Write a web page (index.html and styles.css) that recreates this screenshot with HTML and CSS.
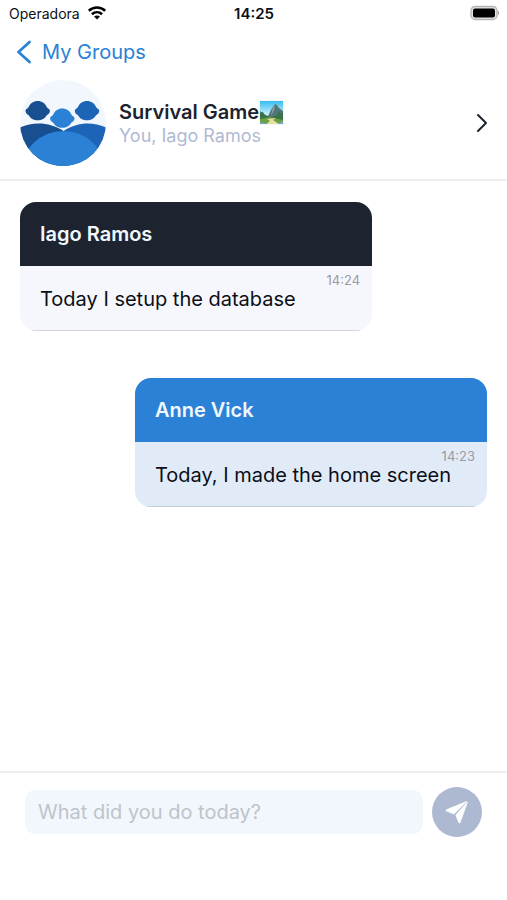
FILE: index.html
```html
<!DOCTYPE html>
<html lang="en">
<head>
<meta charset="utf-8">
<meta name="viewport" content="width=device-width, initial-scale=1">
<title>Survival Game</title>
<link rel="stylesheet" href="styles.css">
</head>
<body>
<div class="app">
  <div class="status">
    <div class="carrier">
      <span>Operadora</span>
      <svg width="20" height="14" viewBox="0 0 20 14" aria-hidden="true" fill="none" stroke="#000" stroke-width="2.6">
        <path d="M1.800 4.700C6.500.4 13.500.4 18.200 4.700"/>
        <path d="M4.900 8.200c3-2.700 7.200-2.700 10.200 0"/>
        <path d="M10 13.500 7 10.600c1.800-1.500 4.200-1.500 6 0z" fill="#000" stroke="none"/>
      </svg>
    </div>
    <time class="clock">14:25</time>
    <svg class="battery" width="30" height="16" viewBox="0 0 30 16" aria-hidden="true">
      <rect x="2" y="1.500" width="26" height="13" rx="4" fill="#e4e4e4" stroke="#b4b4b4" stroke-width="1.300"/>
      <rect x="4" y="3.500" width="22" height="9" rx="2" fill="#000"/>
      <path d="M28.700 5.500c2 .8 2 4.200 0 5z" fill="#aaa"/>
    </svg>
  </div>

  <nav class="nav">
    <a class="back" href="#">
      <svg width="16" height="24" viewBox="0 0 16 24" aria-hidden="true" fill="none" stroke="currentColor" stroke-width="2.700" stroke-linecap="round" stroke-linejoin="round"><path d="M14.500 2 3.500 12l11 10"/></svg>
      <span>My Groups</span>
    </a>
  </nav>

  <header class="group">
    <svg class="avatar" viewBox="0 0 86 86" aria-hidden="true">
      <defs><clipPath id="disc"><circle cx="43" cy="43" r="43"/></clipPath></defs>
      <g clip-path="url(#disc)">
        <rect width="86" height="86" fill="#f1f7fd"/>
        <path d="M0 47.500C15 41 31 43 43.500 51L50 86H0z" fill="#184f90"/>
        <path d="M86 47.500C71 41 56 43 43.500 51L36 86h50z" fill="#1c64b5"/>
        <ellipse cx="43.300" cy="91" rx="42" ry="40" fill="#2a81d5"/>
      </g>
      <path fill="#184f90" d="M5.500 30.500c.3-1.800 2-1.500 3-3.200C10 23.300 13.500 21 17.700 21s7.700 2.300 9.200 6.300c1 1.700 2.700 1.400 3 3.200.2 1.800-1 3.800-3.200 4.700-1.500 3-4.900 5.100-9 5.100s-7.500-2.100-9-5.100c-2.200-.9-3.400-2.900-3.200-4.700z"/>
      <path fill="#1c64b5" d="M54.800 30.500c.3-1.800 2-1.500 3-3.200C59.300 23.300 62.800 21 67 21s7.700 2.300 9.200 6.300c1 1.700 2.700 1.400 3 3.200.2 1.800-1 3.800-3.200 4.700-1.500 3-4.900 5.100-9 5.100s-7.500-2.100-9-5.100c-2.200-.9-3.400-2.900-3.200-4.700z"/>
      <path fill="#2a81d5" d="M30.100 38c.3-1.800 2-1.500 3-3.200 1.500-4 5-6.300 9.200-6.300s7.700 2.300 9.200 6.300c1 1.700 2.700 1.400 3 3.200.2 1.800-1 3.800-3.200 4.700-1.500 3-4.900 5.100-9 5.100s-7.500-2.100-9-5.100c-2.200-.9-3.400-2.900-3.200-4.700z"/>
    </svg>
    <div class="about">
      <h1 class="title">
        <span>Survival Game</span>
        <svg width="25" height="25" viewBox="0 0 25 25" role="img" aria-label="National park">
          <defs>
            <linearGradient id="sky" x2="0" y2="1"><stop stop-color="#35bdf1"/><stop offset=".65" stop-color="#d9f3fa"/></linearGradient>
          </defs>
          <rect x=".5" y=".5" width="24" height="24" fill="#e8eee8"/>
          <rect x="1" y="1" width="23" height="23" fill="url(#sky)"/>
          <path d="M1 11l4 3 6 3v5H1z" fill="#4d8059"/>
          <path d="M9 16l3-6 3-5 2-1 3 4 4 3v9H9z" fill="#52747b"/>
          <path d="M14 7l2-2-1 5-3 6z" fill="#8ba5a4"/>
          <path d="M1 13l3-1 2 4 7 1 5-2 2-4 2 3 2-2v8H1z" fill="#397247"/>
          <path d="M1 19l10-2 13 3v4H1z" fill="#6b9f43"/>
          <path d="M8 19l9-1-3 2 6 4H7l4-3z" fill="#e6dfa0"/>
          <path d="M1 22l9 2H1zM24 21l-6 3h6z" fill="#6caabc"/>
        </svg>
      </h1>
      <p class="members">You, Iago Ramos</p>
    </div>
    <a class="details" href="#" aria-label="Group details">
      <svg width="14" height="20" viewBox="0 0 14 20" aria-hidden="true" fill="none" stroke="currentColor" stroke-width="2" stroke-linecap="round" stroke-linejoin="round"><path d="M3 2l8 8-8 8"/></svg>
    </a>
  </header>

  <main class="messages">
    <article class="message">
      <h2 class="author">Iago Ramos</h2>
      <div class="body">
        <time class="time">14:24</time>
        <p class="text">Today I setup the database</p>
      </div>
    </article>
    <article class="message mine">
      <h2 class="author">Anne Vick</h2>
      <div class="body">
        <time class="time">14:23</time>
        <p class="text">Today, I made the home screen</p>
      </div>
    </article>
  </main>

  <form class="composer">
    <input class="field" type="text" aria-label="Message" placeholder="What did you do today?">
    <button class="send" type="button" aria-label="Send">
      <svg width="24" height="24" viewBox="0 0 24 24" aria-hidden="true" fill="#fff" stroke="#fff" stroke-width=".8" stroke-linejoin="round"><path d="M21.500 1.500 1.500 9.800c-.7.300-.7.900 0 1.200l7.500 3zM22.500 2 10.800 15l3 7.500c.3.700.9.700 1.200 0z"/></svg>
    </button>
  </form>
</div>
</body>
</html>
```
FILE: styles.css
```css
* {
  box-sizing: border-box;
}

body {
  margin: 0;
  background: #fff;
  color: #0b0f16;
  font-family: Inter, "Liberation Sans", sans-serif;
}

h1,
h2,
p {
  margin: 0;
}

svg {
  display: block;
  flex: none;
}

.app {
  display: flex;
  flex-direction: column;
  min-height: 100vh;
}

.status {
  display: grid;
  grid-template-columns: 1fr auto 1fr;
  align-items: center;
  height: 26px;
  padding: 0 8px 0 9px;
  font-size: 14px;
}

.carrier {
  display: flex;
  align-items: center;
  gap: 7px;
}

.clock {
  font-size: 15px;
  font-weight: 600;
}

.battery {
  justify-self: end;
}

.nav {
  display: flex;
  padding: 14px 15px 12px;
}

.back {
  display: flex;
  align-items: center;
  gap: 11px;
  color: #2a81d5;
  font-size: 20px;
  line-height: 24px;
  text-decoration: none;
}

.group {
  display: flex;
  align-items: center;
  gap: 13px;
  padding: 4px 18px 13px 20px;
  border-bottom: 2px solid #efefef;
}

.avatar {
  width: 86px;
  height: 86px;
}

.about {
  flex: 1;
}

.title {
  display: flex;
  align-items: center;
  color: #1d232e;
  font-size: 20px;
  font-weight: 600;
  line-height: 24px;
}

.members {
  color: #b0bad2;
  font-size: 18px;
  line-height: 22px;
}

.details {
  color: #1d232e;
}

.messages {
  display: flex;
  flex: 1;
  flex-direction: column;
  gap: 47px;
  padding: 21px 20px;
}

.message {
  width: 75.4%;
  overflow: hidden;
  border-radius: 16px;
  background: #f6f7fc;
}

.author {
  padding: 20px;
  background: #1d2430;
  color: #f1f7fd;
  font-size: 20px;
  font-weight: 600;
  line-height: 24px;
}

.body {
  display: flex;
  flex-direction: column;
  padding: 6px 12px 20px 20px;
  border-bottom: 1px solid #d5d6da;
}

.time {
  align-self: flex-end;
  color: #9b9ca1;
  font-size: 13px;
  line-height: 16px;
}

.text {
  color: #0b0f16;
  font-size: 20px;
  line-height: 22px;
}

.mine {
  align-self: flex-end;
  background: #e1ebf8;
}

.mine .author {
  background: #2a81d5;
}

.mine .body {
  border-bottom-color: #c5cfdc;
}

.composer {
  display: flex;
  align-items: center;
  gap: 9px;
  padding: 14px 25px 63px;
  border-top: 2px solid #efefef;
}

.field {
  flex: 1;
  min-width: 0;
  height: 44px;
  padding: 0 13px;
  border: 0;
  border-radius: 10px;
  background: #f1f7fd;
  color: #0b0f16;
  font: inherit;
  font-size: 20px;
}

.field::placeholder {
  color: #bec4c8;
  opacity: 1;
}

.send {
  display: grid;
  place-items: center;
  width: 50px;
  height: 50px;
  padding: 0;
  border: 0;
  border-radius: 50%;
  background: #acb9d1;
}
```
